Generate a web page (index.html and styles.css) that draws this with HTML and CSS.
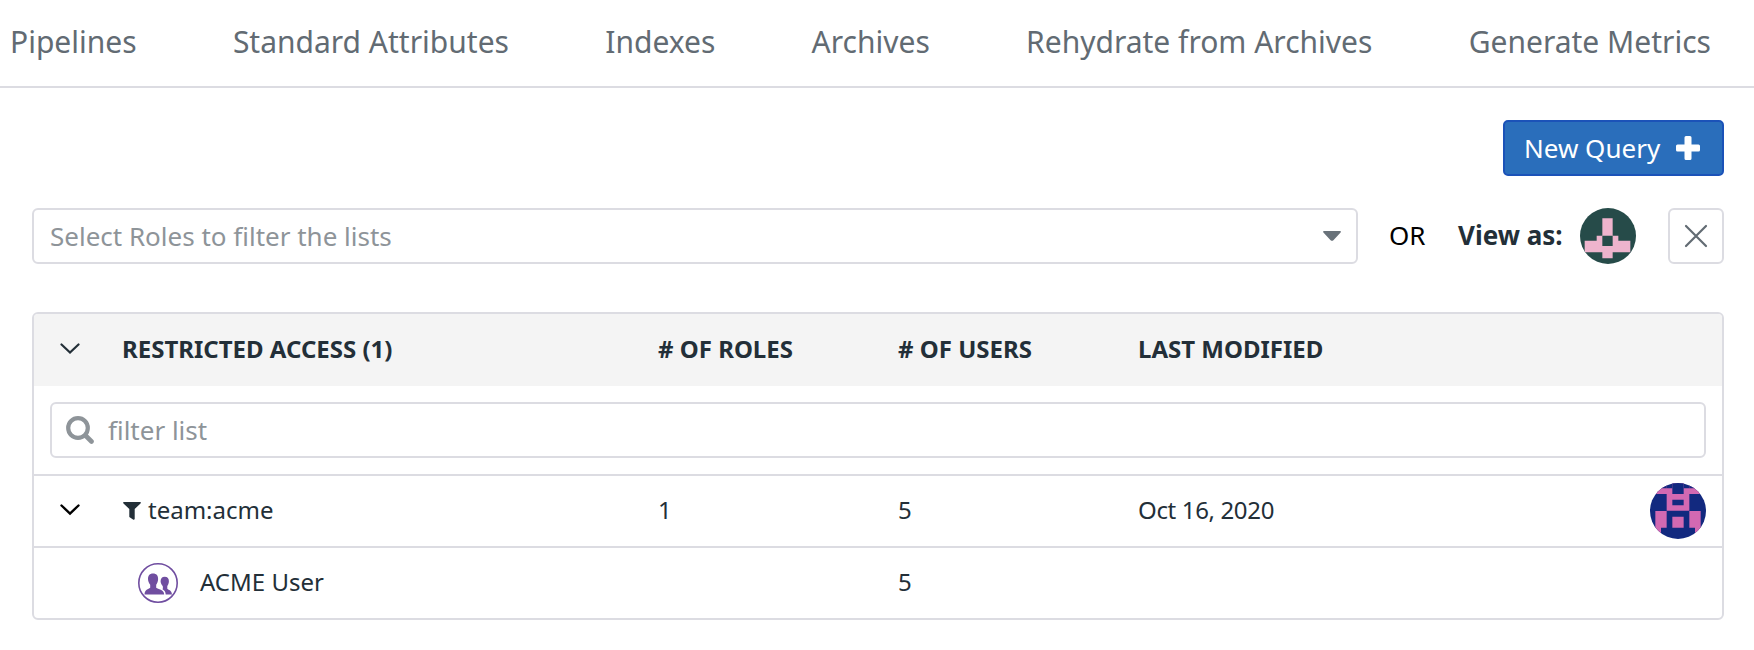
FILE: index.html
```html
<!DOCTYPE html>
<html lang="en">
<head>
<meta charset="utf-8">
<title>Data Access</title>
<link rel="stylesheet" href="styles.css">
</head>
<body>
<nav class="tabs">
  <a class="tab">Pipelines</a>
  <a class="tab">Standard Attributes</a>
  <a class="tab">Indexes</a>
  <a class="tab">Archives</a>
  <a class="tab">Rehydrate from Archives</a>
  <a class="tab">Generate Metrics</a>
</nav>
<main class="content">
  <div class="actions">
    <button class="new-query"><span>New Query</span>
      <svg width="24" height="24" viewBox="0 0 24 24"><path d="M10 0h4q1.500 0 1.500 1.500v7h7q1.500 0 1.500 1.500v4q0 1.500-1.500 1.500h-7v7q0 1.500-1.500 1.500h-4q-1.500 0-1.500-1.500v-7h-7q-1.500 0-1.500-1.500v-4q0-1.500 1.500-1.500h7v-7q0-1.500 1.500-1.500z" fill="#fff"/></svg>
    </button>
  </div>
  <div class="filters">
    <div class="select"><span>Select Roles to filter the lists</span>
      <svg width="18" height="10" viewBox="0 0 18 10"><path d="M1 0h16q1.500.4.600 1.600l-7.200 7.600q-1.400 1.200-2.800 0l-7.200-7.600q-.9-1.200.6-1.600z" fill="#69727a"/></svg>
    </div>
    <span class="or">OR</span>
    <span class="view-as">View as:</span>
    <svg class="avatar" viewBox="0 0 168 168"><rect width="168" height="168" fill="#264b49"/><path d="M67 31h31v52h17v15h36v35H98v18H67v-18H14V98h36V83h17z" fill="#eeb4cd"/><path d="M67 83h31v31H67z" fill="#264b49"/></svg>
    <button class="clear"><svg width="24" height="24" viewBox="0 0 24 24"><path d="M2 2l20 20M22 2L2 22" stroke="#626b73" stroke-width="2.200" stroke-linecap="round"/></svg></button>
  </div>
  <section class="table">
    <div class="row head">
      <svg class="chevron" width="20" height="12" viewBox="0 0 20 12"><path d="M1.500 1.500L10 9.500l8.500-8" fill="none" stroke="#232f38" stroke-width="2.200" stroke-linecap="round"/></svg>
      <span>RESTRICTED ACCESS (1)</span><span># OF ROLES</span><span># OF USERS</span><span>LAST MODIFIED</span>
    </div>
    <div class="search-wrap">
      <div class="search">
        <svg width="28" height="28" viewBox="0 0 28 28"><circle cx="12" cy="12" r="9.800" fill="none" stroke="#8e9499" stroke-width="4.200"/><path d="M19.500 19.500l6 6" stroke="#8e9499" stroke-width="4.600" stroke-linecap="round"/></svg>
        <span>filter list</span>
      </div>
    </div>
    <div class="row item">
      <svg class="chevron" width="20" height="12" viewBox="0 0 20 12"><path d="M1.500 1.500L10 9.500l8.500-8" fill="none" stroke="#000" stroke-width="2.400" stroke-linecap="round"/></svg>
      <span class="query"><svg width="18" height="18" viewBox="0 0 18 18"><path d="M.5 0h17q.7.800 0 1.500L11.700 7v10q-.3 1-1.300.8L6.300 15V7L.5 1.500q-.7-.7 0-1.500z" fill="#232f38"/></svg>team:acme</span>
      <span>1</span><span>5</span><span class="date">Oct 16, 2020</span>
      <svg class="avatar" viewBox="0 0 168 168"><rect width="168" height="168" fill="#12297f"/><path d="M0 16h33V0h17v16h17V0h34v16h17V0h17v16h33v17h-50v50H50V33H0zM16 84h34v50H33v17H16zM118 84h34v67h-17v-17h-17zM67 101h34v33H67z" fill="#d269b2"/><path d="M33 0h17v16H33zM67 0h34v33H67zM67 50h34v17H67zM118 0h17v16h-17z" fill="#12297f"/></svg>
    </div>
    <div class="row item">
      <span class="role"><svg width="40" height="40" viewBox="0 0 40 40"><circle cx="20" cy="20" r="19.200" fill="#fff" stroke="#704ea0" stroke-width="1.600"/><path d="M15 10.500c3.500 0 5.200 2.200 5.100 5.500 0 2-.7 4.200-1.900 5.700v3c1.800 1.800 7.800 1.600 8 6.800H6.500c.2-5.200 3.800-5 5.700-6.800v-3c-1.300-1.500-2.200-3.700-2.200-5.700 0-3.300 1.600-5.500 5-5.500zM26.700 13.800c2.900 0 4.300 1.900 4.200 4.500 0 1.700-.6 3.400-1.600 4.700v2.700c1.500 1.500 4.500 1.500 4.700 5.800h-6.300c-.1-2.800-1.200-4.200-3.200-5.300.5-.5.500-2 .2-3.200-1.200-1.300-2.100-2.900-2.100-4.700 0-2.600 1.300-4.500 4.100-4.500z" fill="#704ea0"/></svg><span>ACME User</span></span>
      <span class="users">5</span>
    </div>
  </section>
</main>
</body>
</html>
```
FILE: styles.css
```css
* { box-sizing: border-box; }
body {
  margin: 0;
  background: #fff;
  color: #232f38;
  font: 24px/34px "Noto Sans", sans-serif;
}
button { font: inherit; padding: 0; }
svg { display: block; flex: none; }
.tabs {
  display: flex;
  gap: 96.300px;
  height: 88px;
  padding: 21px 0 0 10px;
  border-bottom: 2px solid #dcdce2;
  font-size: 30px;
  line-height: 41px;
  color: #626b73;
  white-space: nowrap;
}
.content { padding: 32px 30px 0 32px; }
.actions { display: flex; justify-content: flex-end; }
.new-query {
  display: flex;
  align-items: center;
  justify-content: space-between;
  width: 221px;
  height: 56px;
  padding: 0 22px 0 19px;
  border: 2px solid #1b52b8;
  border-radius: 5px;
  background: #2a6ebb;
  color: #fff;
  font-size: 26px;
}
.filters { display: flex; align-items: center; margin-top: 32px; }
.select {
  display: flex;
  align-items: center;
  justify-content: space-between;
  width: 1326px;
  height: 56px;
  padding: 0 15px 0 16px;
  border: 2px solid #dcdce2;
  border-radius: 6px;
  color: #8e9499;
  font-size: 26px;
}
.or, .view-as { padding-bottom: 2px; font-size: 26px; }
.or { width: 69px; margin-left: 31px; color: #000; }
.view-as { width: 122px; font-weight: 700; white-space: nowrap; }
.avatar { width: 56px; height: 56px; border-radius: 50%; }
.clear {
  display: grid;
  place-items: center;
  width: 56px;
  height: 56px;
  margin-left: auto;
  border: 2px solid #dcdce2;
  border-radius: 6px;
  background: #fff;
}
.table {
  margin-top: 48px;
  border: 2px solid #dcdce2;
  border-radius: 6px;
  overflow: hidden;
}
.row {
  display: grid;
  grid-template-columns: 88px 536px 240px 240px 1fr 56px;
  align-items: center;
  height: 72px;
  padding-right: 16px;
}
.row > span:not(.role), .role > span { padding-bottom: 2px; }
.head { background: #f4f4f4; font-weight: 700; }
.chevron { margin: 0 0 2px 25.500px; }
.item { border-top: 2px solid #dcdce2; }
.search-wrap { padding: 16px; }
.search {
  display: flex;
  align-items: center;
  gap: 14px;
  height: 56px;
  padding-left: 14px;
  border: 2px solid #dcdce2;
  border-radius: 6px;
  color: #8e9499;
  font-size: 26px;
}
.query { display: flex; align-items: center; gap: 7px; padding-left: 1px; }
.query svg { margin-top: 2px; }
.date { letter-spacing: -.35px; }
.role { grid-column: 2; display: flex; align-items: center; gap: 22px; padding-left: 16px; }
.users { grid-column: 4; }
```
